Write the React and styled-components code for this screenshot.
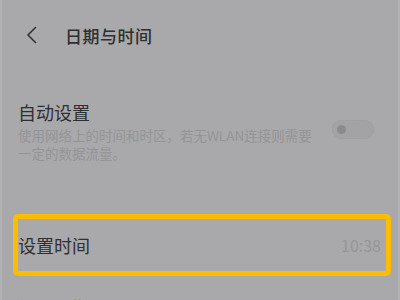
import React from "react";
import styled, { createGlobalStyle } from "styled-components";

const GlobalStyle = createGlobalStyle`
  html, body {
    margin: 0;
    padding: 0;
    background: #a9a9ab;
  }
  body {
    font-family: "Noto Sans CJK SC", "Noto Sans", sans-serif;
  }
`;

const Page = styled.div`
  width: 400px;
  height: 300px;
  overflow: hidden;
  box-sizing: border-box;
  background: #a9a9ab;
  border-left: 2px solid #b2b2b4;
  border-right: 2px solid #b2b2b4;
`;

const Header = styled.div`
  height: 70px;
  display: flex;
  align-items: center;
  padding-left: 24px;
`;

const Back = styled.svg`
  width: 12px;
  height: 18px;
  flex-shrink: 0;
`;

const Title = styled.h1`
  margin: 0 0 0 27px;
  font-size: 17px;
  font-weight: 500;
  color: #2f2f31;
  letter-spacing: 0.5px;
`;

const AutoRow = styled.div`
  display: flex;
  align-items: center;
  justify-content: space-between;
  margin-top: 30px;
  padding: 0 24px 0 16px;
`;

const TextBlock = styled.div`
  width: 303px;
`;

const ItemTitle = styled.div`
  font-size: 18px;
  line-height: 24px;
  color: #2f2f31;
`;

const Sub = styled.div`
  margin-top: 2px;
  font-size: 13.5px;
  line-height: 18px;
  color: #949496;
`;

const Toggle = styled.div`
  width: 42px;
  height: 19px;
  border-radius: 10px;
  background: #a3a3a5;
  box-shadow: inset 0 0 0 1px #a0a0a2;
  display: flex;
  align-items: center;
  padding-left: 5px;
  box-sizing: border-box;
  margin-top: -4px;
`;

const Knob = styled.div`
  width: 9px;
  height: 9px;
  border-radius: 50%;
  background: #8b8b8d;
`;

const List = styled.div`
  margin-top: 52px;
`;

const Row = styled.div`
  position: relative;
  height: 62px;
  display: flex;
  align-items: center;
  justify-content: space-between;
  padding: 0 17px 0 16px;
`;

const RowLabel = styled.span`
  font-size: 18px;
  color: #2f2f31;
`;

const RowValue = styled.span`
  font-size: 16px;
  color: #959597;
`;

const Highlight = styled.div`
  position: absolute;
  left: 11px;
  right: 7px;
  top: 0;
  bottom: 0;
  border: 5px solid #fcbc00;
  border-radius: 5px;
  pointer-events: none;
`;

export default function App() {
  return (
    <>
      <GlobalStyle />
      <Page>
        <Header>
          <Back viewBox="0 0 12 18">
            <path d="M10 1 L2 9 L10 17" fill="none" stroke="#2f2f31" strokeWidth="1.5" />
          </Back>
          <Title>日期与时间</Title>
        </Header>
        <AutoRow>
          <TextBlock>
            <ItemTitle>自动设置</ItemTitle>
            <Sub>使用网络上的时间和时区，若无WLAN连接则需要一定的数据流量。</Sub>
          </TextBlock>
          <Toggle>
            <Knob />
          </Toggle>
        </AutoRow>
        <List>
          <Row>
            <RowLabel>设置时间</RowLabel>
            <RowValue>10:38</RowValue>
            <Highlight />
          </Row>
          <Row>
            <RowLabel>设置日期</RowLabel>
            <RowValue>2021年1月25日</RowValue>
          </Row>
        </List>
      </Page>
    </>
  );
}
